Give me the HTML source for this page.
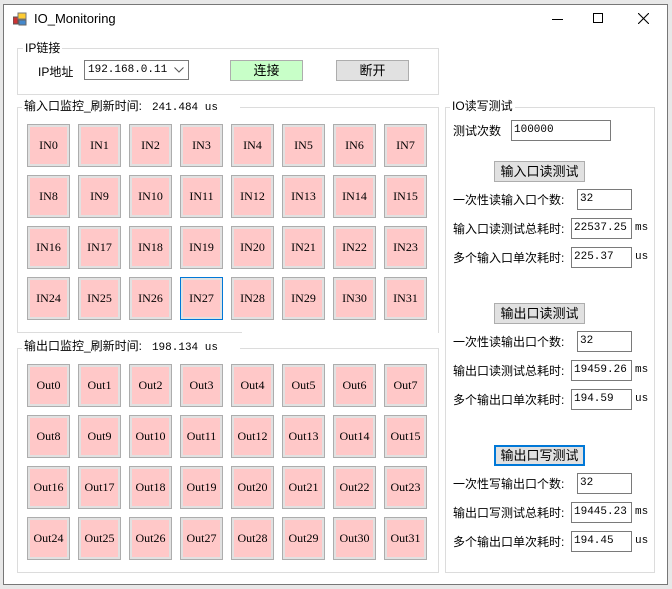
<!DOCTYPE html>
<html><head><meta charset="utf-8"><style>
*{margin:0;padding:0;box-sizing:border-box}
body{width:672px;height:589px;background:#e8e8e8;position:relative;overflow:hidden;font-family:"Liberation Sans","Noto Sans CJK SC",sans-serif;font-size:12px;color:#000}
.win{position:absolute;left:3px;top:4px;width:665px;height:581px;background:#fff;border:1px solid #777}
.a{position:absolute;white-space:nowrap}
.g{position:absolute;border:1px solid #dcdcdc}
.lg{position:absolute;background:#fff;padding:0 2px;line-height:14px}
.b{position:absolute;width:43px;height:43px;border:1px solid #adadad;background:#e1e1e1;padding:2px}
.b div{width:100%;height:100%;background:#ffc8c8;text-align:center;line-height:37px;font-family:"Liberation Serif","Noto Serif CJK SC",serif;font-size:12px}
.btn{position:absolute;border:1px solid #adadad;background:#e1e1e1;text-align:center;font-size:13px}
.tb{position:absolute;border:1px solid #7a7a7a;background:#fff;padding-left:2px;font-family:"Liberation Mono",monospace;font-size:11px;line-height:18px}
.u{font-family:"Liberation Mono",monospace;font-size:11px}
</style></head><body>
<div class="win"></div>
<svg class="a" style="left:13px;top:12px" width="16" height="14"><rect x="0" y="5" width="5" height="7" fill="#c33" stroke="#555" stroke-width="1"/><rect x="5" y="1" width="8" height="6" fill="#fc3" stroke="#777"/><rect x="6" y="8" width="7" height="5" fill="#48c" stroke="#666"/></svg>
<div class="a" style="left:34px;top:11px;font-size:13px">IO_Monitoring</div>
<div class="a" style="left:552px;top:19px;width:11px;height:1px;background:#000"></div>
<div class="a" style="left:593px;top:13px;width:10px;height:10px;border:1px solid #000"></div>
<svg class="a" style="left:638px;top:13px" width="11" height="11"><path d="M0 0L11 11M11 0L0 11" stroke="#000" stroke-width="1.1"/></svg>

<div class="g" style="left:17px;top:48px;width:422px;height:47px"></div>
<div class="lg" style="left:23px;top:41px">IP链接</div>
<div class="a" style="left:38px;top:63px">IP地址</div>
<div class="a" style="left:84px;top:60px;width:105px;height:20px;border:1px solid #7a7a7a;padding-left:3px;line-height:18px;font-family:'Liberation Mono',monospace;font-size:11px">192.168.0.11</div>
<svg class="a" style="left:174px;top:67px" width="10" height="6"><path d="M0.5 0.5L5 5L9.5 0.5" stroke="#555" fill="none"/></svg>
<div class="btn" style="left:230px;top:60px;width:73px;height:21px;background:#c8ffc8;line-height:19px">连接</div>
<div class="btn" style="left:336px;top:60px;width:73px;height:21px;line-height:19px">断开</div>

<div class="g" style="left:17px;top:107px;width:422px;height:226px;border-bottom:none"></div>
<div class="a" style="left:17px;top:332px;width:225px;height:1px;background:#dcdcdc"></div>
<div class="lg" style="left:22px;top:99px;width:218px">输入口监控_刷新时间: <span class="u">&nbsp;241.484 us</span></div>

<div class="g" style="left:17px;top:348px;width:422px;height:225px"></div>
<div class="lg" style="left:22px;top:339px;width:218px">输出口监控_刷新时间: <span class="u">&nbsp;198.134 us</span></div>

<div class="g" style="left:445px;top:107px;width:210px;height:466px"></div>
<div class="lg" style="left:450px;top:99px">IO读写测试</div>
<div class="a" style="left:453px;top:122px">测试次数</div>
<div class="tb" style="left:511px;top:120px;width:100px;height:21px">100000</div>

<div class="btn" style="left:494px;top:161px;width:91px;height:21px;line-height:19px">输入口读测试</div>
<div class="a" style="left:453px;top:191px">一次性读输入口个数:</div>
<div class="tb" style="left:577px;top:189px;width:55px;height:21px">32</div>
<div class="a" style="left:453px;top:220px">输入口读测试总耗时:</div>
<div class="tb" style="left:571px;top:218px;width:61px;height:21px">22537.25</div>
<div class="a u" style="left:635px;top:222px">ms</div>
<div class="a" style="left:453px;top:249px">多个输入口单次耗时:</div>
<div class="tb" style="left:571px;top:247px;width:61px;height:21px">225.37</div>
<div class="a u" style="left:635px;top:251px">us</div>

<div class="btn" style="left:494px;top:303px;width:91px;height:21px;line-height:19px">输出口读测试</div>
<div class="a" style="left:453px;top:333px">一次性读输出口个数:</div>
<div class="tb" style="left:577px;top:331px;width:55px;height:21px">32</div>
<div class="a" style="left:453px;top:362px">输出口读测试总耗时:</div>
<div class="tb" style="left:571px;top:360px;width:61px;height:21px">19459.26</div>
<div class="a u" style="left:635px;top:364px">ms</div>
<div class="a" style="left:453px;top:391px">多个输出口单次耗时:</div>
<div class="tb" style="left:571px;top:389px;width:61px;height:21px">194.59</div>
<div class="a u" style="left:635px;top:393px">us</div>

<div class="btn" style="left:494px;top:445px;width:91px;height:21px;line-height:17px;border:2px solid #0078d7">输出口写测试</div>
<div class="a" style="left:453px;top:475px">一次性写输出口个数:</div>
<div class="tb" style="left:577px;top:473px;width:55px;height:21px">32</div>
<div class="a" style="left:453px;top:504px">输出口写测试总耗时:</div>
<div class="tb" style="left:571px;top:502px;width:61px;height:21px">19445.23</div>
<div class="a u" style="left:635px;top:506px">ms</div>
<div class="a" style="left:453px;top:533px">多个输出口单次耗时:</div>
<div class="tb" style="left:571px;top:531px;width:61px;height:21px">194.45</div>
<div class="a u" style="left:635px;top:535px">us</div>

<div id="grid"></div>
<script>
var h='';
for(var i=0;i<32;i++){var x=27+51*(i%8),r=Math.floor(i/8);
h+='<div class="b" style="left:'+x+'px;top:'+(124+51*r)+'px'+(i==27?';border-color:#0078d7':'')+'"><div>IN'+i+'</div></div>';
h+='<div class="b" style="left:'+x+'px;top:'+(364+51*r)+'px"><div>Out'+i+'</div></div>';}
document.getElementById('grid').innerHTML=h;
</script>
</body></html>
